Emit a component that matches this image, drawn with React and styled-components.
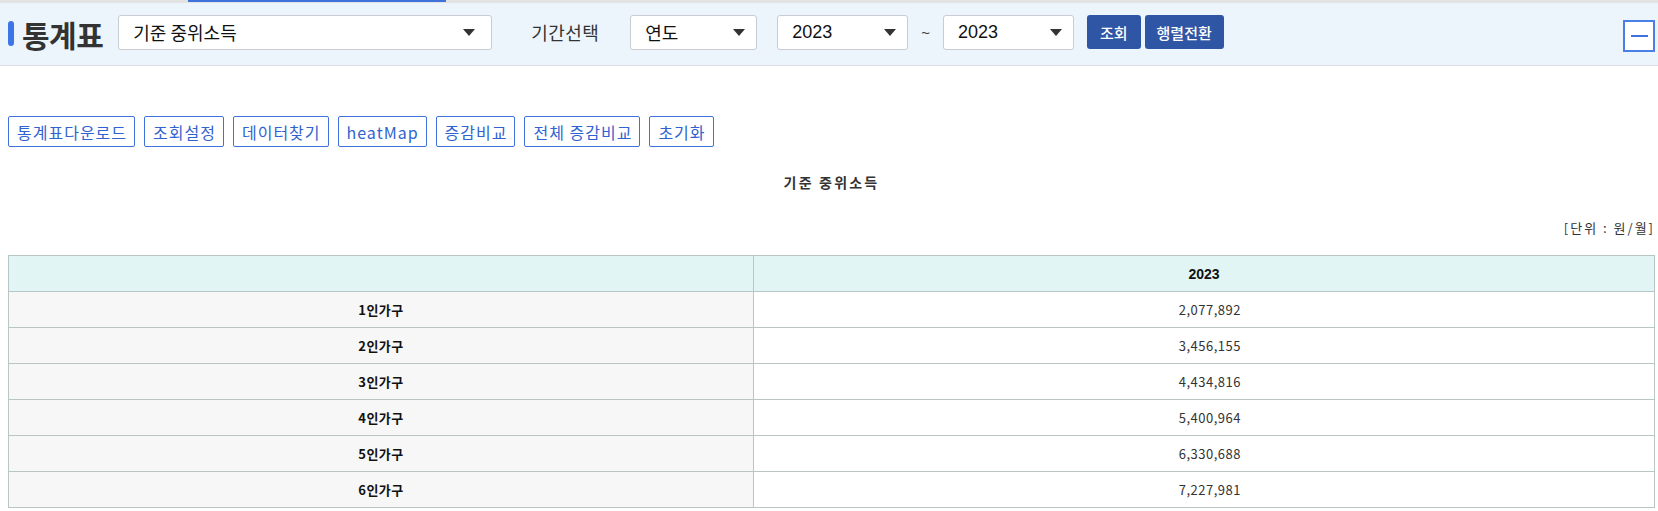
import React from "react";
import styled, { createGlobalStyle } from "styled-components";

const Global = createGlobalStyle`
  html, body { margin: 0; padding: 0; background: #fff; }
  body { font-family: "Noto Sans CJK KR", "Noto Sans", sans-serif; color: #333; }
  * { box-sizing: border-box; }
`;

const Page = styled.div`
  width: 1658px;
  display: flex;
  flex-direction: column;
`;

const TopStrip = styled.div`
  height: 3px;
  background: #e3e3e3;
  display: flex;
`;

const ActiveTab = styled.div`
  margin-left: 188px;
  width: 258px;
  height: 2px;
  background: #3f72dc;
`;

const Header = styled.div`
  height: 63px;
  background: #edf5fc;
  border-bottom: 1px solid #dcdfe3;
  display: flex;
  align-items: center;
  padding: 0 3px 4px 8px;
`;

const Accent = styled.span`
  width: 6px;
  height: 25px;
  border-radius: 3px;
  background: #3d76e6;
  margin-right: 8px;
  margin-top: 3px;
`;

const PageTitle = styled.h1`
  margin: 3px 15px 0 0;
  font-size: 30px;
  font-weight: 700;
  color: #333;
  line-height: 1;
  letter-spacing: -0.5px;
`;

const Select = styled.div`
  width: ${(p) => p.$w}px;
  height: 35px;
  background: #fff;
  border: 1px solid #c9ccd0;
  border-radius: 3px;
  display: flex;
  align-items: center;
  justify-content: space-between;
  padding: 0 ${(p) => p.$pr || 11}px 0 14px;
  margin-left: ${(p) => p.$ml || 0}px;
  font-family: ${(p) => (p.$latin ? '"Liberation Sans", Arial' : '"Noto Sans CJK KR"')}, sans-serif;
  font-size: 18px;
  color: #111;
`;

const Caret = styled.span`
  width: 0;
  height: 0;
  border-left: 6px solid transparent;
  border-right: 6px solid transparent;
  border-top: 7px solid #333;
`;

const Label = styled.span`
  margin-left: 39px;
  font-size: 18px;
  color: #333;
  letter-spacing: 0.4px;
`;

const Tilde = styled.span`
  margin: 0 13px;
  font-family: "Liberation Sans", Arial, sans-serif;
  font-size: 15px;
  color: #333;
`;

const SolidButton = styled.button`
  height: 34px;
  padding: 0 ${(p) => p.$px}px;
  margin-left: ${(p) => p.$ml}px;
  border: none;
  border-radius: 3px;
  background: #2f56a5;
  color: #fff;
  font-family: "Noto Sans CJK KR", sans-serif;
  font-size: 15px;
  font-weight: 500;
  cursor: pointer;
`;

const MinusButton = styled.button`
  margin-left: auto;
  margin-top: 8px;
  width: 32px;
  height: 32px;
  border: 2px solid #4a7fe6;
  background: #fff;
  display: flex;
  align-items: center;
  justify-content: center;
  padding: 0;
  &::before {
    content: "";
    width: 17px;
    height: 2px;
    background: #3f72dc;
  }
`;

const Content = styled.div`
  padding: 0 3px 0 8px;
  display: flex;
  flex-direction: column;
`;

const Toolbar = styled.div`
  margin-top: 50px;
  display: flex;
  gap: 9px;
`;

const OutlineButton = styled.button`
  height: 31px;
  padding: 0 7px 0 8px;
  border: 1px solid #3f72dc;
  border-radius: 2px;
  background: #fff;
  color: #2f63cf;
  font-family: "Noto Sans CJK KR", sans-serif;
  font-size: 16px;
  font-weight: 400;
  letter-spacing: 1px;
  white-space: nowrap;
`;

const TableTitle = styled.div`
  margin-top: 26px;
  text-align: center;
  font-size: 14px;
  font-weight: 700;
  line-height: 18px;
  letter-spacing: 2.2px;
  color: #333;
`;

const Unit = styled.div`
  margin-top: 28px;
  text-align: right;
  font-size: 13px;
  line-height: 18px;
  letter-spacing: 2px;
  color: #333;
`;

const Table = styled.table`
  margin-top: 18px;
  width: 100%;
  border-collapse: collapse;
  font-size: 13px;
  table-layout: fixed;
`;

const Th = styled.th`
  height: 36px;
  background: #e2f5f5;
  border: 1px solid #b9c6c6;
  font-weight: 700;
  font-family: "Liberation Sans", "Noto Sans CJK KR", sans-serif;
  font-size: 14px;
  color: #111;
  padding: 0;
`;

const RowHead = styled.th`
  height: 36px;
  background: #f7f7f7;
  border: 1px solid #b9c6c6;
  font-weight: 700;
  color: #111;
  padding: 0;
  letter-spacing: 0.5px;
`;

const Td = styled.td`
  height: 36px;
  border: 1px solid #b9c6c6;
  text-align: right;
  padding: 0 413px 0 0;
  color: #333;
  letter-spacing: 0.5px;
`;

const rows = [
  ["1인가구", "2,077,892"],
  ["2인가구", "3,456,155"],
  ["3인가구", "4,434,816"],
  ["4인가구", "5,400,964"],
  ["5인가구", "6,330,688"],
  ["6인가구", "7,227,981"],
];

const tools = ["통계표다운로드", "조회설정", "데이터찾기", "heatMap", "증감비교", "전체 증감비교", "초기화"];

export default function App() {
  return (
    <Page>
      <Global />
      <TopStrip>
        <ActiveTab />
      </TopStrip>
      <Header>
        <Accent />
        <PageTitle>통계표</PageTitle>
        <Select $w={374} $pr={16}>
          기준 중위소득
          <Caret />
        </Select>
        <Label>기간선택</Label>
        <Select $w={127} $ml={31}>
          연도
          <Caret />
        </Select>
        <Select $w={131} $ml={20} $latin>
          2023
          <Caret />
        </Select>
        <Tilde>~</Tilde>
        <Select $w={131} $latin>
          2023
          <Caret />
        </Select>
        <SolidButton $px={13} $ml={13}>조회</SolidButton>
        <SolidButton $px={12} $ml={4}>행렬전환</SolidButton>
        <MinusButton aria-label="접기" />
      </Header>
      <Content>
        <Toolbar>
          {tools.map((t) => (
            <OutlineButton key={t}>{t}</OutlineButton>
          ))}
        </Toolbar>
        <TableTitle>기준 중위소득</TableTitle>
        <Unit>[단위 : 원/월]</Unit>
        <Table>
          <colgroup>
            <col style={{ width: 745 }} />
            <col />
          </colgroup>
          <thead>
            <tr>
              <Th />
              <Th>2023</Th>
            </tr>
          </thead>
          <tbody>
            {rows.map(([k, v]) => (
              <tr key={k}>
                <RowHead>{k}</RowHead>
                <Td>{v}</Td>
              </tr>
            ))}
          </tbody>
        </Table>
      </Content>
    </Page>
  );
}
